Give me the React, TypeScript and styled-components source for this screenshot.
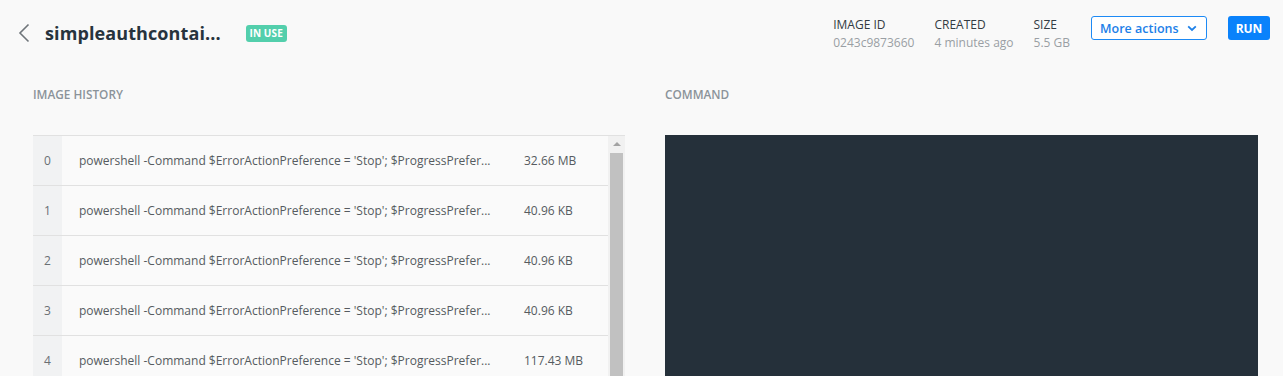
import React from 'react';
import styled, { createGlobalStyle } from 'styled-components';

const GlobalStyle = createGlobalStyle`
  html, body {
    margin: 0;
    padding: 0;
    background: #f9f9f9;
    font-family: 'Open Sans', 'Liberation Sans', sans-serif;
    overflow: hidden;
  }
  * {
    box-sizing: border-box;
  }
`;

const Page = styled.div`
  width: 1283px;
  height: 376px;
  overflow: hidden;
  background: #f9f9f9;
`;

const Header = styled.header`
  display: flex;
  align-items: flex-start;
  justify-content: space-between;
  padding: 16px 13px 0 17px;
  height: 53px;
`;

const TitleGroup = styled.div`
  display: flex;
  align-items: center;
  height: 34px;
`;

const BackButton = styled.button`
  display: flex;
  align-items: center;
  justify-content: center;
  width: 14px;
  height: 22px;
  padding: 0;
  border: none;
  background: transparent;
  cursor: pointer;
`;

const Title = styled.h1`
  margin: 0 0 0 14px;
  font-size: 18px;
  font-weight: 700;
  color: #27333d;
  line-height: 34px;
  letter-spacing: 0.1px;
`;

const Badge = styled.span`
  margin-left: 25px;
  display: inline-flex;
  align-items: center;
  justify-content: center;
  height: 17px;
  width: 41px;
  border-radius: 3px;
  background: #53cfac;
  color: #fff;
  font-size: 10px;
  font-weight: 700;
  letter-spacing: 0.1px;
`;

const Actions = styled.div`
  display: flex;
  align-items: flex-start;
`;

const Meta = styled.div`
  display: flex;
  flex-direction: column;
  margin-right: 20px;
`;

const MetaLabel = styled.span`
  font-size: 12px;
  line-height: 17px;
  color: #333b42;
  text-transform: uppercase;
`;

const MetaValue = styled.span`
  font-size: 12px;
  line-height: 20px;
  color: #9a9fa4;
`;

const OutlineButton = styled.button`
  display: flex;
  align-items: center;
  justify-content: space-between;
  width: 116px;
  height: 24px;
  margin-left: 1px;
  padding: 0 9px 0 8px;
  border: 1px solid #1d8af5;
  border-radius: 3px;
  background: #fff;
  color: #1d80e8;
  font-family: inherit;
  font-size: 12.5px;
  font-weight: 600;
  cursor: pointer;
`;

const PrimaryButton = styled.button`
  width: 42px;
  height: 24px;
  margin-left: 21px;
  padding: 0;
  border: none;
  border-radius: 3px;
  background: #0a82fb;
  color: #fff;
  font-family: inherit;
  font-size: 12px;
  font-weight: 700;
  cursor: pointer;
`;

const Sections = styled.main`
  display: grid;
  grid-template-columns: 592px 593px;
  column-gap: 40px;
  padding: 33px 0 0 33px;
`;

const Section = styled.section`
  display: flex;
  flex-direction: column;
`;

const SectionLabel = styled.h2`
  margin: 0 0 33px;
  font-size: 11.8px;
  font-weight: 600;
  line-height: 16px;
  color: #8b939a;
  text-transform: uppercase;
`;

const Table = styled.div`
  display: flex;
  border-top: 1px solid #e1e1e1;
  background: #fafafa;
  height: 260px;
`;

const Rows = styled.div`
  flex: 1;
  display: flex;
  flex-direction: column;
`;

const Row = styled.div`
  display: flex;
  align-items: stretch;
  height: 50px;
  border-bottom: 1px solid #e1e1e1;
  font-size: 12px;
  color: #555b60;
`;

const IndexCell = styled.div`
  width: 29px;
  flex-shrink: 0;
  display: flex;
  align-items: center;
  justify-content: center;
  background: #f1f2f3;
  color: #6a6f73;
`;

const CommandCell = styled.div`
  width: 462px;
  flex-shrink: 0;
  display: flex;
  align-items: center;
  padding-left: 17px;
  white-space: nowrap;
  overflow: hidden;
`;

const SizeCell = styled.div`
  display: flex;
  align-items: center;
  white-space: nowrap;
`;

const ScrollTrack = styled.div`
  width: 17px;
  flex-shrink: 0;
  display: flex;
  flex-direction: column;
  align-items: center;
  background: #f1f1f1;
`;

const ScrollArrow = styled.div`
  margin-top: 6px;
  width: 0;
  height: 0;
  border-left: 4px solid transparent;
  border-right: 4px solid transparent;
  border-bottom: 4px solid #a3a3a3;
`;

const ScrollThumb = styled.div`
  margin-top: 7px;
  width: 13px;
  flex: 1;
  background: #c1c1c1;
`;

const CommandPanel = styled.div`
  background: #25303a;
  height: 260px;
`;

const history = [
  { size: '32.66 MB' },
  { size: '40.96 KB' },
  { size: '40.96 KB' },
  { size: '40.96 KB' },
  { size: '117.43 MB' },
];

const command = "powershell -Command $ErrorActionPreference = 'Stop'; $ProgressPrefer...";

export default function App() {
  return (
    <Page>
      <GlobalStyle />
      <Header>
        <TitleGroup>
          <BackButton aria-label="Back">
            <svg width="12" height="20" viewBox="0 0 12 20" fill="none">
              <path d="M10.5 1.5 L2 10 L10.5 18.5" stroke="#6f757a" strokeWidth="1.6" />
            </svg>
          </BackButton>
          <Title>simpleauthcontai...</Title>
          <Badge>IN USE</Badge>
        </TitleGroup>
        <Actions>
          <Meta>
            <MetaLabel>Image ID</MetaLabel>
            <MetaValue>0243c9873660</MetaValue>
          </Meta>
          <Meta>
            <MetaLabel>Created</MetaLabel>
            <MetaValue>4 minutes ago</MetaValue>
          </Meta>
          <Meta>
            <MetaLabel>Size</MetaLabel>
            <MetaValue>5.5 GB</MetaValue>
          </Meta>
          <OutlineButton>
            More actions
            <svg width="10" height="7" viewBox="0 0 10 7" fill="none">
              <path d="M1.2 1.4 L5 5 L8.8 1.4" stroke="#1d80e8" strokeWidth="1.8" />
            </svg>
          </OutlineButton>
          <PrimaryButton>RUN</PrimaryButton>
        </Actions>
      </Header>
      <Sections>
        <Section>
          <SectionLabel>Image history</SectionLabel>
          <Table>
            <Rows>
              {history.map((item, i) => (
                <Row key={i}>
                  <IndexCell>{i}</IndexCell>
                  <CommandCell>{command}</CommandCell>
                  <SizeCell>{item.size}</SizeCell>
                </Row>
              ))}
            </Rows>
            <ScrollTrack>
              <ScrollArrow />
              <ScrollThumb />
            </ScrollTrack>
          </Table>
        </Section>
        <Section>
          <SectionLabel>Command</SectionLabel>
          <CommandPanel />
        </Section>
      </Sections>
    </Page>
  );
}
